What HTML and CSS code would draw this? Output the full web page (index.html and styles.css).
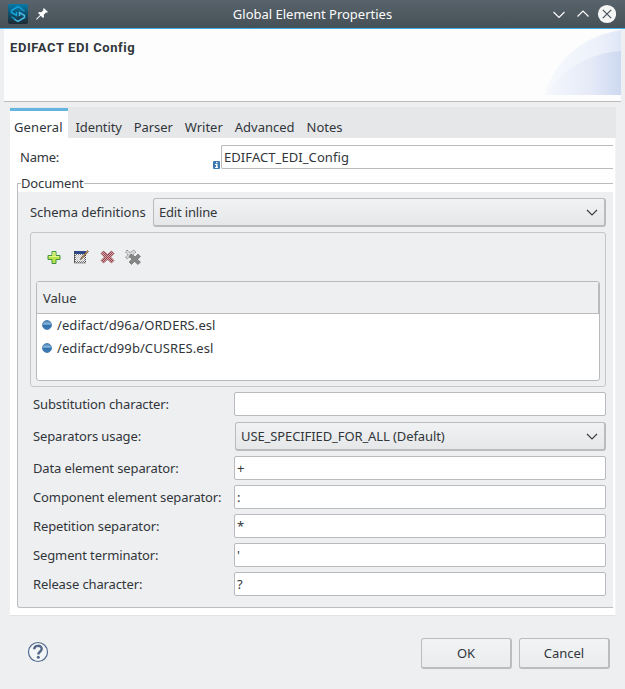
FILE: index.html
```html
<!DOCTYPE html>
<html lang="en">
<head>
<meta charset="utf-8">
<title>Global Element Properties</title>
<link rel="stylesheet" href="styles.css">
</head>
<body>
<div class="window">
  <header class="titlebar">
    <svg class="app-icon" width="20" height="20" viewBox="0 0 20 20">
      <defs><linearGradient id="app" x1="0" y1="0" x2="0" y2="1"><stop offset="0" stop-color="#087ba9"/><stop offset=".5" stop-color="#0d4f6c"/><stop offset="1" stop-color="#202b32"/></linearGradient></defs>
      <rect width="20" height="20" rx="2" fill="url(#app)"/>
      <g fill="none" stroke-width="1.5"><path d="M14 4.800 10 2.500 3.500 6.500v2l5 3V8" stroke="#12a2dc"/><path d="M6 15.200 10 17.500l6.500-4v-2l-5-3V12" stroke="#47b9e5"/><path d="m13 5 3.500 2.200M7 15l-3.500-2.200" stroke="#168fc0"/></g>
    </svg>
    <svg class="pin" width="12" height="12" viewBox="0 0 12 12"><path d="M7.800 0 12 4 10.700 4.800 10 4.500 7.800 6.800 8 9 7 10 4.700 7.700 1 11.500 0 11.500 .3 10.700 4.100 7.100 2 5 3 4 5.200 4.200 7.500 2 7.100 1.200Z" fill="#fcfcfc"/></svg>
    <h1>Global Element Properties</h1>
    <svg class="controls" width="66" height="20" viewBox="0 0 66 20">
      <g fill="none" stroke="#fcfcfc" stroke-width="1.2"><path d="m3.500 8 5.500 5.500L14.500 8M27.500 12.500 33 7l5.500 5.500"/></g>
      <circle cx="57" cy="10" r="9.100" fill="#f4f5f5"/><path d="m52.800 5.800 8.400 8.400m0-8.400-8.400 8.400" stroke="#475057" stroke-width="1.200"/>
    </svg>
  </header>
  <section class="banner">
    <h2>EDIFACT EDI Config</h2>
    <svg width="77" height="67" viewBox="0 0 77 67">
      <defs>
        <linearGradient id="arc1"><stop offset="0" stop-color="#f7f9fd"/><stop offset=".7" stop-color="#edf1fa"/><stop offset="1" stop-color="#dfe7f7"/></linearGradient>
        <linearGradient id="arc2"><stop offset="0" stop-color="#f6f8fd"/><stop offset=".6" stop-color="#e5eaf7"/><stop offset="1" stop-color="#cdd9f1"/></linearGradient>
      </defs>
      <path d="M1 66C9 34 35 8 77 1v65Z" fill="url(#arc1)"/><path d="M1 66C18 42 40 25 77 22v44Z" fill="url(#arc2)"/>
    </svg>
  </section>
  <main class="folder">
    <nav class="tabs"><span class="tab active">General</span><span class="tab">Identity</span><span class="tab">Parser</span><span class="tab">Writer</span><span class="tab">Advanced</span><span class="tab">Notes</span></nav>
    <div class="page">
      <div class="name-row">
        <label>Name:</label>
        <svg class="info" width="7" height="8" viewBox="0 0 7 8"><rect width="7" height="8" rx="1" fill="#3e78b4"/><path d="M3 1h1.500v1.200H3ZM2 3h2.500v3H5v1H2V6h1V4H2Z" fill="#fff"/></svg>
        <div class="field name-field">EDIFACT_EDI_Config</div>
      </div>
      <section class="document">
        <div class="legend"><span>Document</span></div>
        <div class="document-body">
          <div class="schema-row"><label>Schema definitions</label><div class="combo">Edit inline<svg width="12" height="8" viewBox="0 0 12 8"><path d="m1 1 5 5 5-5"/></svg></div></div>
          <div class="inline-group">
            <div class="toolbar">
              <svg width="16" height="16" viewBox="0 0 16 16"><path d="M6 2.500h4v4h4v4h-4v4H6v-4H2v-4h4Z" fill="#b8e34b" stroke="#429342"/><path d="M7 3.500h2v4h4H3h4Z" stroke="#e4f58b" fill="none"/></svg>
              <svg width="16" height="16" viewBox="0 0 16 16"><defs><pattern id="dots" width="2" height="2" patternUnits="userSpaceOnUse"><path d="M0 0h1v1H0ZM1 1h1v1H1Z" fill="#777"/></pattern></defs><path d="M1 3h12v11H1Z" fill="#f3f3f3"/><path d="M1 5h12v9H1Z" fill="url(#dots)"/><path d="M3 6h8v6H3Z" fill="#f0f0ef" opacity=".65"/><path d="M1 2h12v3H1Z" fill="#30498c"/><path d="M1.500 2v12h11V5" fill="none" stroke="#444" stroke-dasharray="1 1"/><path d="m7.500 10.500.7-1.700L14.500 1.500l1 1-6.300 7Z" fill="#d69b57" stroke="#45372e" stroke-width=".6"/></svg>
              <svg width="16" height="16" viewBox="0 0 16 16"><defs><pattern id="reds" width="2" height="2" patternUnits="userSpaceOnUse"><rect width="2" height="2" fill="#e4a5aa"/><path d="M0 0h1v1H0ZM1 1h1v1H1Z" fill="#85434b"/></pattern></defs><path d="m4.500 2 4 3.500 4-3.500L15 4.500 11.500 8l3.500 3.500-2.500 2.500-4-3.500-4 3.500L2 11.500 5.500 8 2 4.500Z" fill="url(#reds)" stroke="#9b5158" stroke-width=".7"/></svg>
              <svg width="16" height="16" viewBox="0 0 16 16"><path d="m2 1 3 2.500L9 1l2 2-3 3 2 2-2 2-3-2-3 2-1.500-2L3 6 .5 3Z" fill="#d5d6d6" stroke="#777" stroke-width=".8" stroke-dasharray="1.500 .8"/><path d="m6 5 4 3 3-3 2.500 2.500L12.500 10.500l3 2.500-2.500 2.500-3.500-3-3 3L4 13l3-3-3-2.500Z" fill="#858686" stroke="#666" stroke-width=".6"/></svg>
            </div>
            <div class="table"><div class="table-head">Value</div><div class="table-row"><i></i>/edifact/d96a/ORDERS.esl</div><div class="table-row"><i></i>/edifact/d99b/CUSRES.esl</div></div>
          </div>
          <div class="form">
            <label>Substitution character:</label><div class="field"></div>
            <label>Separators usage:</label><div class="combo usage">USE_SPECIFIED_FOR_ALL (Default)<svg width="12" height="8" viewBox="0 0 12 8"><path d="m1 1 5 5 5-5"/></svg></div>
            <label>Data element separator:</label><div class="field">+</div>
            <label>Component element separator:</label><div class="field">:</div>
            <label>Repetition separator:</label><div class="field">*</div>
            <label>Segment terminator:</label><div class="field">'</div>
            <label>Release character:</label><div class="field">?</div>
          </div>
        </div>
      </section>
    </div>
  </main>
  <footer>
    <svg class="help" width="22" height="22" viewBox="0 0 22 22"><circle cx="11" cy="11" r="9.500" fill="#f4f5f6" stroke="#536b91" stroke-width="1.200"/><path d="M7.200 8.300C7.200 3.600 14.700 3.900 14.700 7.800c0 2.900-3.400 2.900-3.400 5.600" fill="none" stroke="#526789" stroke-width="2.400"/><circle cx="11.300" cy="16.300" r="1.500" fill="#526789"/></svg>
    <button>OK</button><button>Cancel</button>
  </footer>
</div>
</body>
</html>
```
FILE: styles.css
```css
* { box-sizing: border-box; }
body { margin: 0; background: #eeeff1; color: #31363b; font: 13px/18px "Noto Sans", sans-serif; }
.window { width: 625px; height: 689px; display: flex; flex-direction: column; overflow: hidden; }
svg { display: block; flex: none; }
h1, h2 { margin: 0; font-size: 13px; }
.titlebar { height: 29px; display: flex; align-items: center; padding: 0 8px; background: linear-gradient(#59636b, #465057); border-bottom: 1px solid #3daee9; color: #fcfcfc; }
.pin { margin-left: 8px; }
h1 { flex: 1; text-align: center; font-weight: 400; padding-left: 27px; }
.controls { margin-right: 1px; }
.banner { height: 73px; margin: 0 4px; background: #fdfdfd; border-bottom: 1px solid #b9bbbd; display: flex; justify-content: space-between; padding-left: 6px; }
h2 { font: 700 13px/18px Roboto, sans-serif; letter-spacing: .58px; padding-top: 10px; }
.folder { width: 606px; height: 509px; margin: 5px 0 0 10px; }
.tabs { display: flex; height: 31px; background: #e6e7e9; }
.tab { padding: 11px 3.500px 0; margin-right: 5px; line-height: 18px; letter-spacing: -.1px; }
.tab:nth-child(n+4) { letter-spacing: 0; }
.tab.active { width: 58px; margin: 1px 4px 0 0; padding: 7px 4px 0; border-top: 3px solid #66b5e0; background: #fff; letter-spacing: .1px; }
.page { width: 606px; height: 478px; background: #fff; padding: 7px 2px 0 7px; border-right: 1px solid #f3f4f4; border-bottom: 1px solid #e2e3e4; }
.name-row { display: flex; height: 24px; align-items: center; padding-left: 3px; }
.name-row label { width: 193px; letter-spacing: -.2px; }
.info { align-self: flex-end; width: 7px; margin-right: 1px; }
.field { height: 24px; border: 1px solid #b9bbbe; border-radius: 2px; background: #fff; line-height: 22px; padding-left: 2px; }
.name-field { flex: 1; border-right: 0; border-radius: 2px 0 0 2px; letter-spacing: .07px; }
.legend { height: 23px; padding-top: 5px; display: flex; align-items: center; }
.legend::before { content: ""; width: 3px; height: 9px; border: solid #bbbdbf; border-width: 1px 0 0 1px; margin-top: 9px; }
.legend::after { content: ""; flex: 1; height: 1px; background: #b9bbbd; margin-top: 1px; }
.legend span { letter-spacing: -.15px; }
.document-body { height: 416px; border-left: 1px solid #bcbec0; border-bottom: 1px solid #bcbec0; border-radius: 0 0 0 3px; background: #eeeff1; padding: 6px 7px 0 12px; }
.schema-row { display: flex; align-items: center; height: 29px; }
.schema-row label { width: 123px; padding-bottom: 1px; letter-spacing: -.04px; }
.combo { height: 29px; flex: 1; display: flex; align-items: center; justify-content: space-between; border: 1px solid #b9bbbe; border-bottom-width: 2px; border-right-width: 2px; border-radius: 3px; background: linear-gradient(#f1f2f3, #e6e7e9); padding: 0 6px 0 5px; letter-spacing: -.18px; }
.usage { letter-spacing: -.1px; }
.combo svg path { fill: none; stroke: #3b4045; stroke-width: 1.2; }
.combo svg { margin-top: 2px; }
.inline-group { height: 155px; margin-top: 5px; border: 1px solid #c4c6c8; border-radius: 3px; padding: 0 5px; }
.toolbar { height: 48px; display: flex; gap: 10px; padding: 16px 0 0 11px; }
.toolbar svg:first-child { margin: 0 1px 0 -1px; }
.table { height: 100px; border: 1px solid #b7b9bb; border-radius: 3px; background: #fff; overflow: hidden; }
.table-head { height: 32px; line-height: 33px; padding-left: 6px; background: #eeeff1; border-bottom: 1px solid #b9bbbe; border-right: 1px solid #b9bbbe; }
.table-row { height: 23px; line-height: 23px; padding-left: 5px; display: flex; letter-spacing: .08px; }
.table-row i { flex: none; width: 10px; height: 10px; border-radius: 50%; margin: 6px 5px 0 0; background: linear-gradient(#4986b8, #8ebbe0 40%, #306fa9 52%, #3c7eb7); border: 1px solid #4d7fae; }
.form { display: grid; grid-template-columns: 201px 372px; grid-template-rows: 24px 30px repeat(5, 24px); row-gap: 5px; align-items: center; padding-left: 3px; margin-top: 5px; }
.form label { white-space: nowrap; letter-spacing: -.12px; }
.form .usage { margin-left: 1px; align-self: end; }
footer { flex: 1; display: flex; align-items: flex-start; padding: 22px 15px 0 27px; }
.help { margin: 3px auto 0 0; }
button { width: 91px; height: 31px; margin-left: 7px; border: 1px solid #babcbf; border-right-width: 2px; border-bottom-width: 2px; border-radius: 3px; background: linear-gradient(#f2f3f4, #ebecee); color: #31363b; font: inherit; padding: 0; }
```
